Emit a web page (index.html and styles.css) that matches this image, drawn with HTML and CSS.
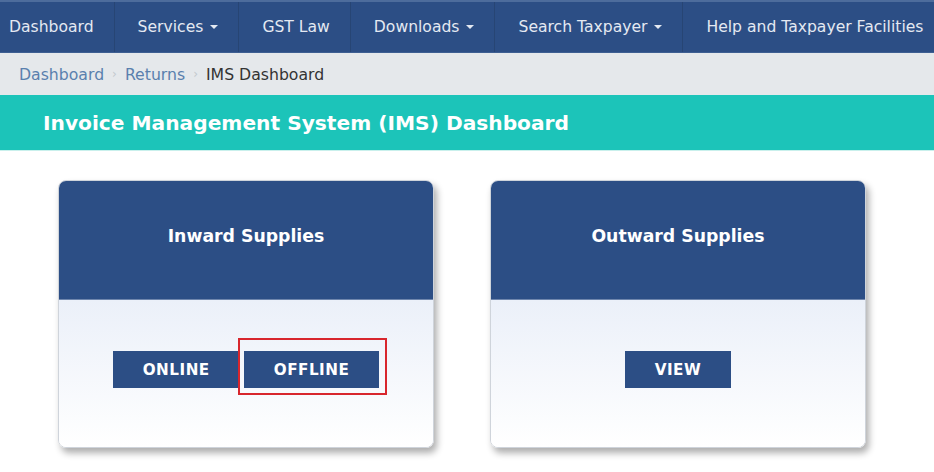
FILE: index.html
```html
<!DOCTYPE html>
<html lang="en">
<head>
<meta charset="utf-8">
<title>IMS Dashboard</title>
<link rel="stylesheet" href="styles.css">
</head>
<body>
<nav class="topnav">
  <a class="nav-item first">Dashboard</a>
  <a class="nav-item">Services <span class="caret"></span></a>
  <a class="nav-item">GST Law</a>
  <a class="nav-item">Downloads <span class="caret"></span></a>
  <a class="nav-item">Search Taxpayer <span class="caret"></span></a>
  <a class="nav-item">Help and Taxpayer Facilities</a>
</nav>
<div class="breadcrumb">
  <a class="crumb-link">Dashboard</a><span class="sep">›</span>
  <a class="crumb-link">Returns</a><span class="sep">›</span>
  <span class="crumb-current">IMS Dashboard</span>
</div>
<div class="page-title">Invoice Management System (IMS) Dashboard</div>
<main class="cards">
  <section class="card">
    <div class="card-head">Inward Supplies</div>
    <div class="card-body">
      <button class="btn">ONLINE</button>
      <button class="btn highlighted">OFFLINE</button>
    </div>
  </section>
  <section class="card">
    <div class="card-head">Outward Supplies</div>
    <div class="card-body">
      <button class="btn">VIEW</button>
    </div>
  </section>
</main>
</body>
</html>
```
FILE: styles.css
```css
* { box-sizing: border-box; }
html, body { margin: 0; padding: 0; background: #ffffff; }
body {
  font-family: "DejaVu Sans", Verdana, sans-serif;
  width: 934px;
  height: 472px;
  overflow: hidden;
}
.topnav {
  display: flex;
  height: 53px;
  background: #2c4e85;
  border-top: 2px solid #4d6c9c;
  border-bottom: 1px solid #3e5f92;
}
.nav-item {
  display: flex;
  align-items: center;
  padding: 0 20px 0 23px;
  color: #e4e9f2;
  font-size: 15.6px;
  white-space: nowrap;
  border-left: 1px solid #274574;
}
.nav-item.first { padding-left: 9px; border-left: none; }
.caret {
  display: inline-block;
  width: 0; height: 0;
  margin-left: 7px;
  border-left: 4px solid transparent;
  border-right: 4px solid transparent;
  border-top: 4px solid #e4e9f2;
}
.breadcrumb {
  height: 42px;
  display: flex;
  align-items: center;
  padding-left: 19px;
  background: #e5e8eb;
  font-size: 15.7px;
}
.crumb-link { color: #5a80ae; }
.sep { color: #c3c8ce; margin: 0 8px; font-size: 12px; }
.crumb-current { color: #333; }
.page-title {
  height: 56px;
  display: flex;
  align-items: center;
  padding-left: 43px;
  background: #1cc4b9;
  color: #ffffff;
  font-weight: bold;
  font-size: 20.2px;
  border-bottom: 1px solid #c9f0ec;
}
.cards {
  display: flex;
  gap: 56px;
  padding: 29px 0 0 58px;
}
.card {
  width: 376px;
  height: 268px;
  border-radius: 8px;
  border: 1px solid #cfd4db;
  overflow: hidden;
  box-shadow: 3px 5px 7px rgba(0, 0, 0, 0.32);
  display: flex;
  flex-direction: column;
}
.card-head {
  height: 119px;
  background: #2c4e85;
  color: #ffffff;
  font-weight: bold;
  font-size: 17.3px;
  text-align: center;
  padding-top: 45px;
  border-bottom: 1px solid #6f86ad;
}
.card-body {
  flex: 1;
  background: linear-gradient(#ebf0f9, #ffffff);
  display: flex;
  justify-content: center;
  align-items: flex-start;
  gap: 4px;
  padding-top: 51px;
}
.btn {
  height: 37px;
  padding: 0 30px;
  border: none;
  border-radius: 0;
  background: #2c4e85;
  color: #ffffff;
  font-family: "DejaVu Sans", Verdana, sans-serif;
  font-weight: bold;
  font-size: 15.2px;
  letter-spacing: 0.5px;
  position: relative;
}
.btn.highlighted::after {
  content: "";
  position: absolute;
  top: -13px;
  left: -6px;
  right: -8px;
  bottom: -7px;
  border: 2px solid #d8262d;
}
```
